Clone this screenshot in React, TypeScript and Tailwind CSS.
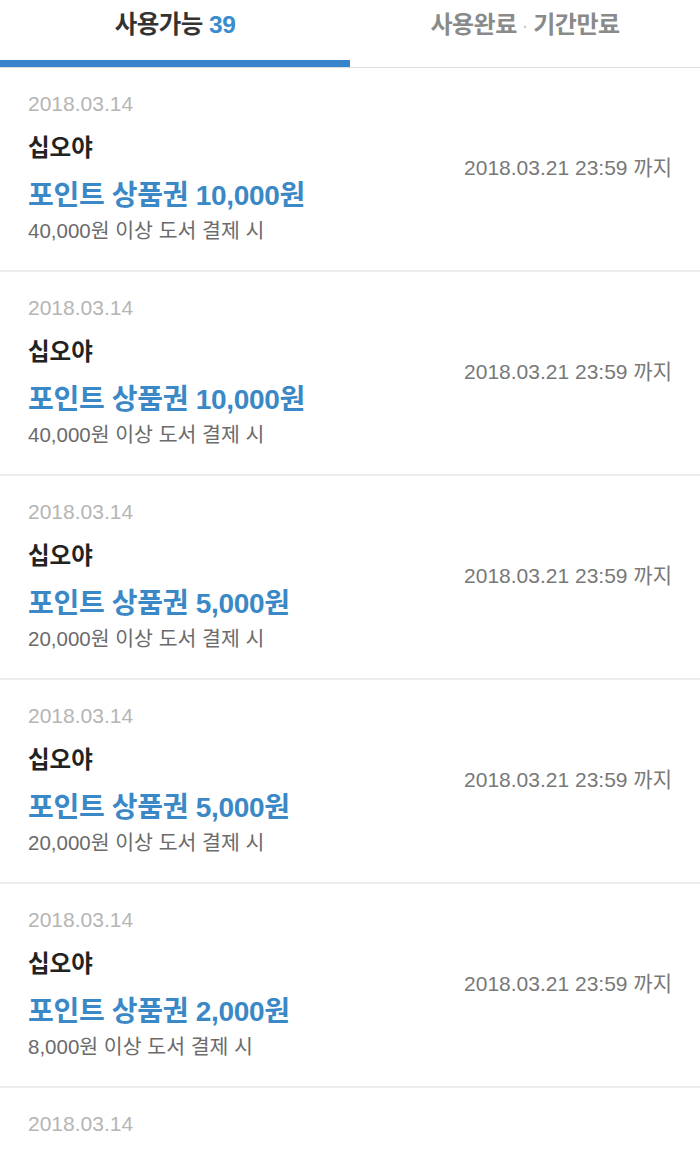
import React from 'react';

const coupons = [
  { amount: '10,000원', min: '40,000원 이상 도서 결제 시' },
  { amount: '10,000원', min: '40,000원 이상 도서 결제 시' },
  { amount: '5,000원', min: '20,000원 이상 도서 결제 시' },
  { amount: '5,000원', min: '20,000원 이상 도서 결제 시' },
  { amount: '2,000원', min: '8,000원 이상 도서 결제 시' },
];

const font = { fontFamily: '"Liberation Sans", "Noto Sans CJK KR", sans-serif' };

const App: React.FC = () => {
  return (
    <div className="w-[700px] min-h-[1153px] bg-white overflow-hidden" style={font}>
      {/* tabs */}
      <div className="flex border-b border-[#dedede]">
        <div className="flex-1 flex flex-col">
          <div className="h-[60px] pt-[10px] text-center text-[24.5px] leading-[30px] font-bold text-[#333] tracking-[-0.5px]">
            사용가능 <span className="text-[#3a8ccc]">39</span>
          </div>
          <div className="h-[7px] bg-[#3784cd]" />
        </div>
        <div className="flex-1 flex flex-col">
          <div className="h-[60px] pt-[10px] text-center text-[24px] leading-[30px] font-bold text-[#8a8a8a] tracking-[-0.5px]">
            사용완료 <span className="text-[#c8c8c8] text-[14px] align-middle">·</span> 기간만료
          </div>
          <div className="h-[7px]" />
        </div>
      </div>

      {/* list */}
      {coupons.map((c, i) => (
        <div key={i} className="h-[204px] flex border-b-2 border-[#ececec] pl-[28px] pr-[28px]">
          <div className="flex-1 flex flex-col">
            <div className="mt-[23px] text-[21px] leading-[26px] text-[#b5b5b5]">2018.03.14</div>
            <div className="mt-[17px] text-[23.5px] leading-[28px] font-bold text-[#222]">십오야</div>
            <div className="mt-[17px] text-[28px] leading-[34px] font-bold text-[#3a88c6] tracking-[-0.3px]">
              포인트 상품권 {c.amount}
            </div>
            <div className="mt-[5px] text-[20.5px] leading-[26px] text-[#6b6b6b]">{c.min}</div>
          </div>
          <div className="self-center pb-[2px] text-[21px] leading-[26px] text-[#787878]">
            2018.03.21 23:59 까지
          </div>
        </div>
      ))}

      <div className="pl-[28px]">
        <div className="mt-[23px] text-[21px] leading-[26px] text-[#b5b5b5]">2018.03.14</div>
      </div>
    </div>
  );
};

export default App;
